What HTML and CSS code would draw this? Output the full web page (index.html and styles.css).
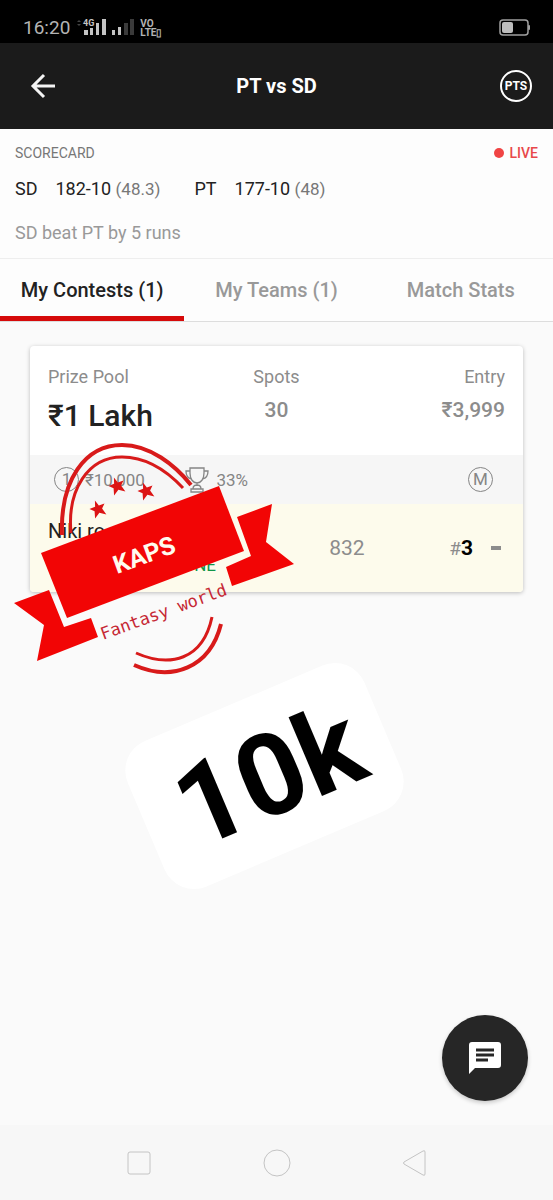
FILE: index.html
```html
<!DOCTYPE html>
<html lang="en">
<head>
    <meta charset="UTF-8">
    <meta name="viewport" content="width=device-width, initial-scale=1.0">
    <title>PT vs SD</title>
    <link rel="stylesheet" href="styles.css">
</head>
<body>

<div class="status-bar">
    <span class="clock">16:20</span>
    <svg class="signal" width="58" height="20" viewBox="0 0 58 20">
        <path d="M1 4l2-2 2 2zM1 6l2 2 2-2z" fill="#444"/>
        <text x="7" y="8" class="signal-text">4G</text>
        <g fill="#c4c4c4">
            <rect x="8" y="12" width="4" height="5"/>
            <rect x="14" y="10" width="3" height="7"/>
            <rect x="20" y="5" width="3" height="12"/>
            <rect x="26" y="1" width="4" height="16"/>
            <rect x="36" y="12" width="3" height="5"/>
            <rect x="42" y="9" width="3" height="8"/>
        </g>
        <g fill="#3a3a3a">
            <rect x="48" y="5" width="4" height="12"/>
            <rect x="54" y="1" width="4" height="16"/>
        </g>
    </svg>
    <span class="volte">VO<br>LTE▯</span>
    <svg class="battery" width="32" height="18" viewBox="0 0 32 18">
        <rect x="1" y="1" width="28" height="15" rx="3" fill="none" stroke="#a0a0a0" stroke-width="1.5"/>
        <rect x="3" y="3" width="11" height="11" rx="2" fill="#bdbdbd"/>
        <rect x="29" y="6" width="2" height="5" rx="1" fill="#a0a0a0"/>
    </svg>
</div>

<header class="top-bar">
    <button class="icon-btn" aria-label="Back">
        <svg width="26" height="26" viewBox="0 0 26 26" fill="none" stroke="#f4f4f4" stroke-width="3">
            <path d="M25 13H3M14 2L3 13l11 11"/>
        </svg>
    </button>
    <h1>PT vs SD</h1>
    <button class="pts">PTS</button>
</header>

<section class="scorecard">
    <div class="score-head">
        <h2>SCORECARD</h2>
        <span class="live">LIVE</span>
    </div>
    <div class="scores">
        <div class="team"><span>SD</span><span>182-10 <small>(48.3)</small></span></div>
        <div class="team"><span>PT</span><span>177-10 <small>(48)</small></span></div>
    </div>
    <p class="match-result">SD beat PT by 5 runs</p>
</section>

<nav class="tabs">
    <a href="#contests" class="active">My Contests (1)</a>
    <a href="#teams">My Teams (1)</a>
    <a href="#stats">Match Stats</a>
</nav>

<main id="contests">
    <div class="card">
        <div class="card-head">
            <div>
                <p class="label">Prize Pool</p>
                <p class="prize">₹1 Lakh</p>
            </div>
            <div>
                <p class="label">Spots</p>
                <p class="value">30</p>
            </div>
            <div>
                <p class="label">Entry</p>
                <p class="value">₹3,999</p>
            </div>
        </div>
        <div class="card-info">
            <span class="ring">1</span>
            <span class="first-prize">₹10,000</span>
            <svg class="trophy" width="24" height="26" viewBox="0 0 24 26" fill="none" stroke="#858585" stroke-width="1.3">
                <path d="M5 1h14v5c0 6-3 10-7 10S5 12 5 6zM5 4H1c0 5 2 7 5 8M19 4h4c0 5-2 7-5 8M12 16v3M8 22c0-3 2-4 4-4s4 1 4 4M6 22h12v3H6z"/>
            </svg>
            <span>33%</span>
            <span class="ring multi">M</span>
        </div>
        <div class="card-row">
            <div class="player">
                <p class="name">Niki ro</p>
                <p class="zone">WINNING ZONE</p>
            </div>
            <span class="points">832</span>
            <span class="rank">#<b>3</b></span>
            <span class="dash"></span>
        </div>

        <svg class="stamp" width="290" height="240" viewBox="10 440 290 240">
            <g fill="none" stroke="#d81a1a">
                <path d="M62 535C60 480 85 445 122 445C150 445 175 465 191 485" stroke-width="4"/>
                <path d="M71 533C67 490 88 457 122 457C148 457 168 472 183 488" stroke-width="3"/>
                <path d="M136 653C170 668 203 660 212 617" stroke-width="3"/>
                <path d="M134 665C172 682 210 668 221 624" stroke-width="4"/>
            </g>
            <defs>
                <path id="star" d="M0-9L2-3 8-3 4 1 6 8 0 4-6 8-4 1-8-3-2-3z"/>
            </defs>
            <g fill="#dc1414">
                <use href="#star" transform="translate(117 486) rotate(-20)"/>
                <use href="#star" transform="translate(146 491) rotate(-20)"/>
                <use href="#star" transform="translate(98 509) rotate(-20)"/>
            </g>
            <g fill="#f20505">
                <path d="M41 553L219 486 244 551 67 618z"/>
                <path d="M237 517L272 504 266 542 294 564 232 586 226 567 251 556z"/>
                <path d="M14 603L49 590 64 627 91 618 98 637 37 661 44 625z"/>
            </g>
            <text class="stamp-name" transform="translate(117 574) rotate(-20)">KAPS</text>
            <text class="stamp-sub" transform="translate(103 640) rotate(-20)">Fantasy world</text>
        </svg>
    </div>

    <div class="sticker">10k</div>
    <button class="chat" aria-label="Chat">
        <svg width="32" height="32" viewBox="0 0 32 32">
            <path d="M3 0h26q3 0 3 3v20q0 3-3 3H6l-6 6V3q0-3 3-3z" fill="#fff"/>
            <path d="M7 8h18M7 13h18M7 18h12" stroke="#262626" stroke-width="3"/>
        </svg>
    </button>
</main>

<footer class="nav-bar">
    <button aria-label="Recent apps">
        <svg width="28" height="28" viewBox="0 0 28 28"><rect x="3" y="3" width="22" height="22" rx="2"/></svg>
    </button>
    <button aria-label="Home">
        <svg width="28" height="28" viewBox="0 0 28 28"><circle cx="14" cy="14" r="13"/></svg>
    </button>
    <button aria-label="Back">
        <svg width="28" height="28" viewBox="0 0 28 28"><path d="M3 13L22 2q2-1 2 1v22q0 2-2 1L3 15q-1-1 0-2z"/></svg>
    </button>
</footer>

</body>
</html>
```
FILE: styles.css
```css
* {
    box-sizing: border-box;
}
body {
    font-family: Roboto, "Noto Sans", sans-serif;
    margin: 0;
    min-height: 100vh;
    display: flex;
    flex-direction: column;
    background-color: #fafafa;
    color: #222;
}
h1, h2, p {
    margin: 0;
}
button {
    padding: 0;
    border: none;
    background: none;
    font-family: inherit;
    cursor: pointer;
}
.status-bar {
    height: 43px;
    padding: 12px 22px 0 23px;
    display: flex;
    align-items: center;
    background-color: #000;
    color: #b4b4b4;
}
.clock {
    font-size: 19px;
}
.signal {
    margin-left: 6px;
}
.signal-text {
    font-size: 9px;
    font-weight: bold;
    fill: #c4c4c4;
}
.volte {
    margin-left: 6px;
    font-size: 10px;
    line-height: 9px;
    font-weight: bold;
}
.battery {
    margin-left: auto;
}
.top-bar {
    height: 86px;
    padding: 0 21px;
    display: grid;
    grid-template-columns: 35px 1fr 35px;
    align-items: center;
    background-color: #1b1b1b;
    color: #fff;
}
.icon-btn {
    height: 26px;
    text-align: right;
}
.top-bar h1 {
    font-size: 20px;
    font-weight: 700;
    text-align: center;
}
.pts {
    width: 32px;
    height: 32px;
    justify-self: end;
    border: 2px solid #fff;
    border-radius: 50%;
    color: #fff;
    font-size: 12px;
    font-weight: bold;
}
.scorecard {
    padding: 14px 15px 13px;
    background-color: #fdfdfd;
    border-bottom: 1px solid #eee;
}
.score-head {
    display: flex;
    justify-content: space-between;
    line-height: 20px;
}
.score-head h2 {
    font-size: 14px;
    font-weight: 400;
    color: #777;
}
.live {
    display: flex;
    align-items: center;
    gap: 6px;
    font-size: 14px;
    font-weight: 500;
    color: #e8484a;
}
.live::before {
    content: "";
    width: 10px;
    height: 10px;
    border-radius: 50%;
    background-color: #f04444;
}
.scores {
    display: flex;
    gap: 34px;
    margin-top: 14px;
    line-height: 24px;
    font-size: 18px;
}
.team {
    display: flex;
    gap: 18px;
}
.team small {
    font-size: 17px;
    color: #777;
}
.match-result {
    margin-top: 20px;
    line-height: 24px;
    font-size: 18px;
    color: #999;
}
.tabs {
    display: grid;
    grid-template-columns: repeat(3, 1fr);
    background-color: #fdfdfd;
    border-bottom: 1px solid #ddd;
}
.tabs a {
    height: 62px;
    line-height: 62px;
    text-align: center;
    text-decoration: none;
    font-size: 20px;
    font-weight: 500;
    color: #999;
}
.tabs .active {
    color: #222;
    border-bottom: 5px solid #d60a0a;
}
main {
    position: relative;
    flex: 1;
    padding: 24px 30px;
}
.card {
    position: relative;
    background-color: #fff;
    border-radius: 4px;
    box-shadow: 0 1px 4px rgba(0, 0, 0, 0.25);
}
.card-head {
    height: 109px;
    padding: 19px 18px;
    display: grid;
    grid-template-columns: 1fr 1fr 1fr;
    text-align: center;
}
.card-head div:first-child {
    text-align: left;
}
.card-head div:last-child {
    text-align: right;
}
.label {
    font-size: 18px;
    line-height: 24px;
    color: #8c8c8c;
}
.value {
    margin-top: 7px;
    font-size: 21px;
    line-height: 28px;
    font-weight: 500;
    color: #8c8c8c;
}
.prize {
    margin-top: 9px;
    font-size: 30px;
    line-height: 36px;
    font-weight: 500;
}
.card-info {
    height: 49px;
    padding: 0 30px 0 24px;
    display: flex;
    align-items: center;
    background-color: #f6f6f6;
    font-size: 17px;
    color: #858585;
}
.ring {
    width: 25px;
    height: 25px;
    border: 1px solid #858585;
    border-radius: 50%;
    line-height: 23px;
    text-align: center;
}
.first-prize {
    margin-left: 6px;
}
.trophy {
    margin: 0 7px 0 auto;
}
.multi {
    margin-left: 220px;
}
.card-row {
    height: 88px;
    padding: 0 22px 0 18px;
    display: flex;
    align-items: center;
    background-color: #fdfbec;
    border-radius: 0 0 4px 4px;
    font-size: 21px;
    color: #8c8c8c;
}
.player {
    flex: 1;
}
.name {
    font-size: 20px;
    line-height: 34px;
    color: #222;
}
.zone {
    padding-left: 48px;
    font-size: 17px;
    line-height: 34px;
    color: #109548;
}
.points {
    width: 120px;
}
.rank {
    font-size: 19px;
}
.rank b {
    font-size: 21px;
    color: #000;
}
.dash {
    width: 10px;
    height: 4px;
    margin-left: 18px;
    background-color: #8c8c8c;
}
/* stamp and sticker lie over the contest list */
.stamp {
    position: absolute;
    left: -20px;
    top: 94px;
}
.stamp-name {
    font-size: 25px;
    font-weight: 700;
    fill: #fffbee;
}
.stamp-sub {
    font-family: "DejaVu Sans Mono", monospace;
    font-size: 17px;
    fill: #c62834;
}
.sticker {
    position: absolute;
    left: 136px;
    top: 375px;
    width: 257px;
    height: 158px;
    padding-left: 8px;
    border-radius: 32px;
    background-color: #fff;
    color: #000;
    font-size: 114px;
    font-weight: 700;
    line-height: 162px;
    text-align: center;
    transform: rotate(-23deg);
}
.chat {
    position: absolute;
    right: 25px;
    bottom: 24px;
    width: 86px;
    height: 86px;
    border-radius: 50%;
    background-color: #262626;
    box-shadow: 0 2px 4px rgba(0, 0, 0, 0.2);
}
.chat svg {
    display: block;
    margin: auto;
}
.nav-bar {
    height: 75px;
    display: flex;
    justify-content: center;
    align-items: center;
    gap: 110px;
    background-color: #f7f7f7;
}
.nav-bar svg {
    display: block;
    fill: none;
    stroke: #c4c4c4;
}
```
